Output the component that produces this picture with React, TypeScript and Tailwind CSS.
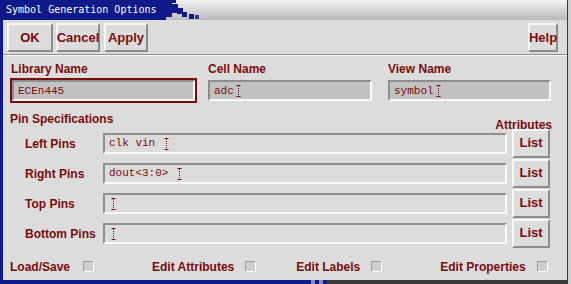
import type { ReactNode } from 'react';

const red = 'text-[#7a0c0c]';

function Cursor() {
  return (
    <svg width="5" height="12" viewBox="0 0 5 12" className="inline-block align-[-2px] ml-[2px]">
      <path d="M0.5 0.5h4M0.5 11.5h4" stroke="#6a1010" strokeWidth="1" />
      <path d="M2.5 1v10" stroke="#6a1010" strokeWidth="1" strokeDasharray="1 1" />
    </svg>
  );
}

function Button({ children, className = '' }: { children: ReactNode; className?: string }) {
  return (
    <div
      className={`flex items-center justify-center h-[29px] bg-[#dcdcdc] border-2 border-t-[#f8f8f8] border-l-[#f8f8f8] border-r-[#8c8c8c] border-b-[#8c8c8c] font-bold text-[13px] ${red} ${className}`}
    >
      {children}
    </div>
  );
}

function Field({ value, dark = false, cursor = false }: { value: string; dark?: boolean; cursor?: boolean }) {
  return (
    <div
      className={`flex items-center h-[21px] px-[4px] pt-[1px] border-2 border-t-[#8e8e8e] border-l-[#8e8e8e] border-r-[#fafafa] border-b-[#fafafa] font-['Liberation_Mono',monospace] text-[11px] ${red} ${dark ? 'bg-[#c2c2c2]' : 'bg-[#dcdcdc]'}`}
    >
      <span className="whitespace-pre">{value}</span>
      {cursor && <Cursor />}
    </div>
  );
}

function Check() {
  return (
    <span className="inline-block w-[11px] h-[11px] bg-[#cfcfcf] border border-t-[#9a9a9a] border-l-[#9a9a9a] border-r-white border-b-white" />
  );
}

const pinRows = [
  { label: 'Left Pins', value: 'clk vin ' },
  { label: 'Right Pins', value: 'dout<3:0> ' },
  { label: 'Top Pins', value: '' },
  { label: 'Bottom Pins', value: '' },
];

export default function App() {
  return (
    <div className="w-[571px] h-[284px] bg-[#cfcfcf] font-['Liberation_Sans',Arial,sans-serif] select-none">
      <div className="flex flex-col w-[568px] h-[284px] bg-[#dcdcdc] border-l-[3px] border-[#10198a] border-r border-r-[#3a3a3a]">
        {/* title bar */}
        <div className="flex h-[20px] -ml-[3px]">
          <div className="w-[166px] bg-[#10198a] text-white font-['DejaVu_Sans_Mono',monospace] text-[10px] leading-[20px] pl-[6px]">
            Symbol Generation Options
          </div>
          <svg width="36" height="20" viewBox="0 0 36 20" className="shrink-0">
            <defs>
              <linearGradient id="tb" x1="0" y1="0" x2="0" y2="1">
                <stop offset="0" stopColor="#f2f2f2" />
                <stop offset="1" stopColor="#bdbdbd" />
              </linearGradient>
            </defs>
            <rect width="36" height="20" fill="url(#tb)" />
            <rect x="0" y="0" width="6" height="17" fill="#10198a" />
            <rect x="6" y="4" width="6" height="9" fill="#10198a" />
            <rect x="11" y="8" width="6" height="6" fill="#10198a" />
            <rect x="16" y="12" width="5" height="5" fill="#10198a" />
            <rect x="23" y="14" width="5" height="5" fill="#10198a" />
            <rect x="29" y="15" width="4" height="4" fill="#2a36a0" />
            <rect x="6" y="0" width="4" height="3" fill="#10198a" />
          </svg>
          <div className="flex-1 bg-gradient-to-b from-[#f4f4f4] to-[#b9b9b9]" />
        </div>

        {/* button bar */}
        <div className="flex items-start pt-[3px] pl-[4px] pr-[8px] h-[34px]">
          <Button className="w-[46px]">OK</Button>
          <Button className="w-[44px] ml-[3px]">Cancel</Button>
          <Button className="w-[44px] ml-[4px]">Apply</Button>
          <Button className="w-[30px] ml-auto mr-[1px]">Help</Button>
        </div>
        <div className="h-[2px] border-t border-t-[#8e8e8e] border-b border-b-[#fafafa]" />

        {/* name fields */}
        <div className="flex pl-[7px] pt-[5px]">
          <div className="w-[187px]">
            <div className={`font-bold text-[12px] leading-[17px] pl-[1px] ${red}`}>Library Name</div>
            <div className="border-2 border-[#7a0c0c]">
              <Field value="ECEn445" dark />
            </div>
          </div>
          <div className="w-[164px] ml-[11px]">
            <div className={`font-bold text-[12px] leading-[17px] ${red}`}>Cell Name</div>
            <div className="mt-[2px]">
              <Field value="adc" dark cursor />
            </div>
          </div>
          <div className="w-[163px] ml-[16px]">
            <div className={`font-bold text-[12px] leading-[17px] ${red}`}>View Name</div>
            <div className="mt-[2px]">
              <Field value="symbol" dark cursor />
            </div>
          </div>
        </div>

        {/* pin specs */}
        <div className="flex items-start pl-[7px] pr-[15px] mt-[8px]">
          <div className={`font-bold text-[12px] leading-[16px] ${red}`}>Pin Specifications</div>
          <div className={`ml-auto mt-[6px] font-bold text-[12px] leading-[16px] ${red}`}>Attributes</div>
        </div>
        <div className="flex flex-col gap-[8px] mt-[-1px] pl-[22px]">
          {pinRows.map((row) => (
            <div key={row.label} className="flex items-center h-[22px]">
              <div className={`w-[78px] font-bold text-[12px] pt-[1px] ${red}`}>{row.label}</div>
              <div className="w-[404px]">
                <Field value={row.value} cursor />
              </div>
              <Button className="w-[38px] h-[23px] ml-[5px] text-[12px]">List</Button>
            </div>
          ))}
        </div>

        {/* bottom toggles */}
        <div className={`flex items-center mt-[13px] pl-[7px] font-bold text-[12px] ${red}`}>
          <span>Load/Save</span>
          <span className="ml-[13px] mt-[2px]"><Check /></span>
          <span className="ml-[58px]">Edit Attributes</span>
          <span className="ml-[11px] mt-[2px]"><Check /></span>
          <span className="ml-[40px]">Edit Labels</span>
          <span className="ml-[11px] mt-[2px]"><Check /></span>
          <span className="ml-[58px]">Edit Properties</span>
          <span className="ml-[11px] mt-[2px]"><Check /></span>
        </div>

        {/* bottom frame */}
        <div className="mt-auto flex h-[4px] -ml-[3px]">
          <div className="w-[311px] bg-[#10198a]" />
          <div className="w-[4px] bg-[#8a8ab8]" />
          <div className="w-[4px] bg-[#10198a]" />
          <div className="w-[4px] bg-[#8a8ab8]" />
          <div className="w-[4px] bg-[#10198a]" />
          <div className="flex-1 bg-[#3a3a3a]" />
        </div>
      </div>
    </div>
  );
}
